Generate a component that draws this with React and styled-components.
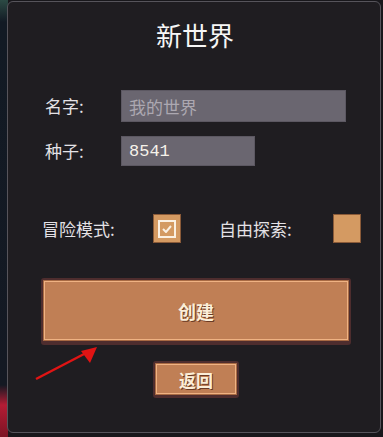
import React from 'react';
import styled, { createGlobalStyle } from 'styled-components';

const GlobalStyle = createGlobalStyle`
  html, body {
    margin: 0;
    padding: 0;
  }

  body {
    width: 383px;
    height: 437px;
    overflow: hidden;
    font-family: 'Noto Sans CJK SC', 'Noto Sans', sans-serif;
    background:
      linear-gradient(to bottom, #2c4a44 0, #121a24 22px, #141923 385px, #b41c34 405px, #7c1424 437px) left / 8px 100% no-repeat,
      #18171b;
  }
`;

const Page = styled.div`
  position: relative;
  width: 383px;
  height: 437px;
  padding: 1px 0 0 7px;
  box-sizing: border-box;
`;

const Panel = styled.div`
  width: 374px;
  height: 432px;
  box-sizing: border-box;
  border: 1px solid #56545b;
  border-radius: 6px;
  background: #1f1d21;
  display: flex;
  flex-direction: column;
  align-items: flex-start;
  padding: 16px 0 0 33px;
`;

const Title = styled.h1`
  width: 308px;
  margin: 0;
  text-align: center;
  font-size: 26px;
  font-weight: 400;
  line-height: 33px;
  color: #f6f6f6;
`;

const Field = styled.div`
  display: flex;
  align-items: center;
  margin-top: ${(p) => p.$top}px;
`;

const Label = styled.span`
  flex-shrink: 0;
  width: ${(p) => p.$width}px;
  margin-left: ${(p) => p.$left || 0}px;
  font-size: 17px;
  line-height: 20px;
  color: #e4e2e6;
`;

const Input = styled.div`
  box-sizing: border-box;
  width: ${(p) => p.$width}px;
  height: ${(p) => p.$height}px;
  background: #6a6670;
  border: 1px solid #5c5862;
  padding-left: 7px;
  display: flex;
  align-items: center;
  font-size: 17px;
  color: ${(p) => (p.$placeholder ? '#aca8b1' : '#f6f2ea')};
  font-family: ${(p) => (p.$mono ? "'Liberation Mono', monospace" : "'Noto Sans CJK SC', sans-serif")};
`;

const Options = styled.div`
  display: flex;
  align-items: center;
  margin-top: 48px;
`;

const Check = styled.div`
  flex-shrink: 0;
  box-sizing: border-box;
  width: 28px;
  height: 29px;
  background: #d49a62;
  border: 1px solid #8a5a38;
  margin-right: ${(p) => p.$gap || 0}px;
  display: flex;
  align-items: center;
  justify-content: center;
`;

const CheckInner = styled.div`
  box-sizing: border-box;
  width: 18px;
  height: 18px;
  border: 2px solid #fbf0e2;
  display: flex;
  align-items: center;
  justify-content: center;
`;

const BigButton = styled.button`
  box-sizing: border-box;
  width: 310px;
  height: 67px;
  margin-top: 35px;
  background: #c07f55;
  border: 2px solid #4e2d2e;
  border-bottom-width: 4px;
  border-radius: 3px;
  box-shadow: inset 0 0 0 1px #a86a43, inset 0 0 0 2px #efb283;
  font-family: 'Noto Sans CJK SC', sans-serif;
  font-size: 18px;
  font-weight: 700;
  color: #fbeed8;
  text-shadow: 1px 1px 0 #6a3a24;
  cursor: pointer;
`;

const SmallButton = styled(BigButton)`
  width: 86px;
  height: 37px;
  margin: 16px 0 0 112px;
  font-size: 17px;
  border-width: 2px 2px 3px;
`;

const Arrow = styled.svg`
  position: absolute;
  left: 0;
  top: 0;
  pointer-events: none;
`;

const App = () => (
  <Page>
    <GlobalStyle />
    <Panel>
      <Title>新世界</Title>
      <Field $top={39}>
        <Label $width={76} $left={4}>名字:</Label>
        <Input $width={225} $height={32} $placeholder>我的世界</Input>
      </Field>
      <Field $top={14}>
        <Label $width={76} $left={4}>种子:</Label>
        <Input $width={134} $height={30} $mono>8541</Input>
      </Field>
      <Options>
        <Label $width={111} $left={1}>冒险模式:</Label>
        <Check $gap={38}>
          <CheckInner>
            <svg width="10" height="8" viewBox="0 0 10 8">
              <polyline points="1,4 4,7 9,1" fill="none" stroke="#fbf0e2" strokeWidth="2" />
            </svg>
          </CheckInner>
        </Check>
        <Label $width={114}>自由探索:</Label>
        <Check />
      </Options>
      <BigButton>创建</BigButton>
      <SmallButton>返回</SmallButton>
    </Panel>
    <Arrow width="383" height="437" viewBox="0 0 383 437">
      <line x1="36" y1="379" x2="86" y2="353" stroke="#e01414" strokeWidth="2.5" />
      <polygon points="97,347 81,351 90,363" fill="#e01414" />
    </Arrow>
  </Page>
);

export default App;
